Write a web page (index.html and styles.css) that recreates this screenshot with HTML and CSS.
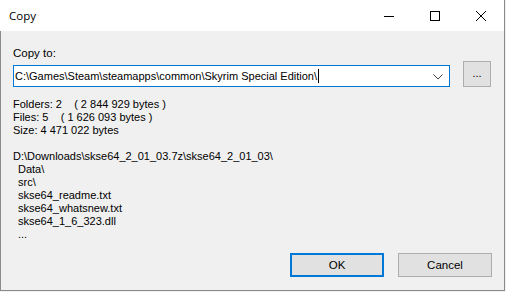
FILE: index.html
```html
<!DOCTYPE html>
<html>
<head>
<meta charset="utf-8">
<link rel="stylesheet" href="styles.css">
</head>
<body>
<div class="window">
  <div class="titlebar">
    <div class="title">Copy</div>
    <div class="controls">
      <div class="ctl"><svg width="10" height="10" viewBox="0 0 10 10"><path d="M0 5.5H10" stroke="#000" stroke-width="1"/></svg></div>
      <div class="ctl"><svg width="10" height="10" viewBox="0 0 10 10"><rect x="0.5" y="0.5" width="9" height="9" fill="none" stroke="#000" stroke-width="1"/></svg></div>
      <div class="ctl"><svg width="10" height="10" viewBox="0 0 10 10"><path d="M0 0L10 10M10 0L0 10" stroke="#000" stroke-width="1"/></svg></div>
    </div>
  </div>
  <div class="content">
    <div class="label">Copy to:</div>
    <div class="row">
      <div class="combo">
        <span class="combo-text">C:\Games\Steam\steamapps\common\Skyrim Special Edition\</span><span class="caret"></span>
        <svg class="chev" width="10" height="6" viewBox="0 0 10 6"><path d="M0.5 0.5L5 5L9.5 0.5" fill="none" stroke="#444" stroke-width="1"/></svg>
      </div>
      <div class="browse">...</div>
    </div>
    <div class="info">
      <div class="line">Folders: 2    ( 2 844 929 bytes )</div>
      <div class="line">Files: 5    ( 1 626 093 bytes )</div>
      <div class="line">Size: 4 471 022 bytes</div>
      <div class="line"> </div>
      <div class="line">D:\Downloads\skse64_2_01_03.7z\skse64_2_01_03\</div>
      <div class="line sub">Data\</div>
      <div class="line sub">src\</div>
      <div class="line sub">skse64_readme.txt</div>
      <div class="line sub">skse64_whatsnew.txt</div>
      <div class="line sub">skse64_1_6_323.dll</div>
      <div class="line sub">...</div>
    </div>
    <div class="buttons">
      <div class="btn btn-default">OK</div>
      <div class="btn">Cancel</div>
    </div>
  </div>
</div>
</body>
</html>
```
FILE: styles.css
```css
html, body {
  margin: 0;
  padding: 0;
  background: #f0f0f0;
}
body {
  width: 506px;
  height: 292px;
  font-family: "Liberation Sans", Arial, sans-serif;
  color: #000;
}
.window {
  width: 504px;
  height: 290px;
  border-right: 1px solid #8a8a8a;
  border-bottom: 1px solid #8a8a8a;
  display: flex;
  flex-direction: column;
  background: #f0f0f0;
}
.titlebar {
  height: 31px;
  background: #fff;
  display: flex;
  align-items: center;
  flex-shrink: 0;
}
.title {
  flex: 1;
  padding-left: 9px;
  font-family: "Open Sans", "Noto Sans", sans-serif;
  font-size: 11.5px;
  padding-bottom: 1px;
}
.controls {
  display: flex;
  height: 31px;
}
.ctl {
  width: 46px;
  height: 31px;
  display: flex;
  align-items: center;
  justify-content: center;
}
.content {
  flex: 1;
  border-left: 1px solid #8a8a8a;
  padding: 14px 12px 13px 12px;
  display: flex;
  flex-direction: column;
}
.label {
  font-size: 11.5px;
  line-height: 16px;
  height: 16px;
}
.row {
  display: flex;
  align-items: center;
  margin-top: 3px;
}
.combo {
  width: 434px;
  height: 20px;
  border: 1px solid #0078d7;
  background: #fff;
  display: flex;
  align-items: center;
  position: relative;
  font-size: 11px;
  padding-left: 1px;
}
.combo-text {
  white-space: pre;
}
.caret {
  display: inline-block;
  width: 1px;
  height: 14px;
  background: #000;
  margin-left: 1px;
}
.chev {
  position: absolute;
  right: 6px;
  top: 8px;
}
.browse {
  margin-left: 13px;
  width: 26px;
  height: 22px;
  border: 1px solid #adadad;
  background: #e1e1e1;
  display: flex;
  align-items: center;
  justify-content: center;
  font-size: 11px;
  line-height: 1;
  padding-bottom: 2px;
  box-sizing: content-box;
  margin-top: -3px;
}
.info {
  margin-top: 11px;
  font-size: 11px;
}
.line {
  height: 13px;
  line-height: 13px;
  white-space: pre;
}
.sub {
  padding-left: 5px;
}
.buttons {
  margin-top: auto;
  display: flex;
  justify-content: flex-end;
  gap: 14px;
}
.btn {
  width: 92px;
  height: 22px;
  border: 1px solid #adadad;
  background: #e1e1e1;
  display: flex;
  align-items: center;
  justify-content: center;
  font-size: 11.5px;
}
.btn-default {
  width: 90px;
  height: 20px;
  border: 2px solid #0078d7;
}
```
